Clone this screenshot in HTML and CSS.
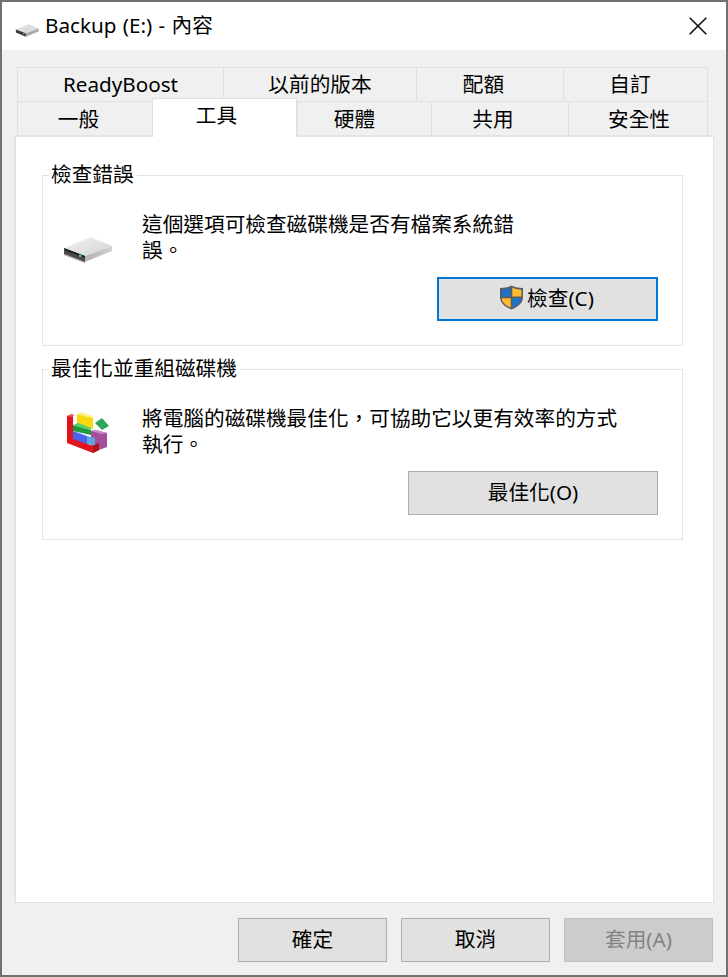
FILE: index.html
```html
<!DOCTYPE html>
<html lang="zh-Hant">
<head>
  <meta charset="UTF-8" />
  <title>Backup (E:) - 內容</title>
  <link rel="stylesheet" href="styles.css">
</head>
<body>
  <div class="window">
    <div class="titlebar">
      <svg class="title-icon" width="26" height="15" viewBox="10 10 55 30">
        <polygon points="14,23 41,12 62,21 35,31" fill="#dedede"/>
        <polygon points="35,31 62,21 62,27 35,38" fill="#a9a9a9"/>
        <polygon points="14,23 35,31 35,38 14,29" fill="#3b3b3b"/>
        <rect x="29" y="30" width="3" height="3" fill="#3fd04a"/>
      </svg>
      <span class="title-text">Backup (E:) - 內容</span>
      <svg class="close-icon" width="18" height="18" viewBox="0 0 18 18">
        <path d="M0.7 0.7 L17.3 17.3 M17.3 0.7 L0.7 17.3" stroke="#111" stroke-width="1.6" fill="none"/>
      </svg>
    </div>

    <div class="content">
      <div class="tabs">
        <div class="tab-row row-top">
          <div class="tab">ReadyBoost</div>
          <div class="tab">以前的版本</div>
          <div class="tab">配額</div>
          <div class="tab">自訂</div>
        </div>
        <div class="tab-row row-bottom">
          <div class="tab">一般</div>
          <div class="tab active">工具</div>
          <div class="tab">硬體</div>
          <div class="tab">共用</div>
          <div class="tab">安全性</div>
        </div>
      </div>

      <div class="panel">
        <fieldset class="group">
          <legend>檢查錯誤</legend>
          <div class="group-body">
            <div class="group-icon">
              <svg class="icon-drive" width="55" height="30" viewBox="10 10 55 30">
                <defs>
                  <linearGradient id="driveTop" x1="0" y1="0" x2="1" y2="1">
                    <stop offset="0" stop-color="#f4f4f4"/>
                    <stop offset="1" stop-color="#d2d2d2"/>
                  </linearGradient>
                  <linearGradient id="driveSide" x1="0" y1="0" x2="1" y2="0">
                    <stop offset="0" stop-color="#b4b4b4"/>
                    <stop offset="1" stop-color="#d0d0d0"/>
                  </linearGradient>
                </defs>
                <polygon points="14,23 41,12 62,21 35,31" fill="url(#driveTop)"/>
                <polygon points="35,31 62,21 62,26 35,37" fill="url(#driveSide)"/>
                <polygon points="14,23 35,31 35,37 14,29" fill="#4a4a4a"/>
                <polygon points="14,23 35,31 35,33 16,26" fill="#222"/>
                <polygon points="14,29 35,37 35,38 14,30" fill="#999"/>
                <rect x="29" y="29.5" width="2.5" height="2.5" fill="#35d64a"/>
              </svg>
            </div>
            <div class="group-main">
              <p class="desc">這個選項可檢查磁碟機是否有檔案系統錯<br>誤。</p>
              <div class="action">
                <button class="btn btn-check focused">
                  <svg class="shield" width="25" height="25" viewBox="0 0 25 25">
                    <path d="M12.5 0.5 C10 2 6 3 1 3 L1 12 C1 18 6 22 12.5 24.5 C19 22 24 18 24 12 L24 3 C19 3 15 2 12.5 0.5 Z" fill="#5c5c5c"/>
                    <path d="M11.7 2.6 C9 4 6 4.6 2.6 4.7 L2.6 11.6 L11.7 11.6 Z" fill="#1d73cc"/>
                    <path d="M13.3 2.6 C16 4 19 4.6 22.4 4.7 L22.4 11.6 L13.3 11.6 Z" fill="#fdbb30"/>
                    <path d="M2.6 13.2 L11.7 13.2 L11.7 22.6 C7 20.6 3.2 17.6 2.6 13.2 Z" fill="#fdbb30"/>
                    <path d="M22.4 13.2 L13.3 13.2 L13.3 22.6 C18 20.6 21.8 17.6 22.4 13.2 Z" fill="#1d73cc"/>
                  </svg>
                  <span>檢查(C)</span>
                </button>
              </div>
            </div>
          </div>
        </fieldset>

        <fieldset class="group">
          <legend>最佳化並重組磁碟機</legend>
          <div class="group-body">
            <div class="group-icon">
              <svg class="icon-defrag" width="47" height="44" viewBox="10 12 47 44">
                <polygon points="36,31 41,30 52,33 52,47 44,50 36,47" fill="#a24f9c"/>
                <polygon points="36,31 41,30 52,33 47,34" fill="#c98ac4"/>
                <polygon points="22,14 38,18 38,29 22,26" fill="#f6d90f"/>
                <polygon points="22,14 26,12 38,16 38,18" fill="#fdf08a"/>
                <polygon points="12,16 17,14 18,16 18,38 38,46 44,43 44,50 38,53 12,43" fill="#e0141f"/>
                <polygon points="38,46 44,43 44,50 38,53" fill="#b01018"/>
                <polygon points="12,16 17,14 19,15 18,17" fill="#f0606a"/>
                <polygon points="18,25 36,30 36,35 18,31" fill="#1f9a3d"/>
                <polygon points="18,25 23,23 36,28 36,30" fill="#52d06a"/>
                <polygon points="18,31 32,36 32,44 18,39" fill="#4a63ea"/>
                <polygon points="32,36 40,38 40,45 32,44" fill="#5aa6de"/>
                <polygon points="40,23 47,18 54,26 47,30" fill="#2fa75a"/>
              </svg>
            </div>
            <div class="group-main">
              <p class="desc">將電腦的磁碟機最佳化，可協助它以更有效率的方式<br>執行。</p>
              <div class="action">
                <button class="btn btn-optimize">最佳化(O)</button>
              </div>
            </div>
          </div>
        </fieldset>
      </div>

      <div class="footer">
        <button class="btn btn-footer">確定</button>
        <button class="btn btn-footer">取消</button>
        <button class="btn btn-footer disabled">套用(A)</button>
      </div>
    </div>
  </div>
</body>
</html>
```

FILE: styles.css
```css
* {
  box-sizing: border-box;
}

body {
  margin: 0;
  background: #fff;
  color: #000;
  font-family: "Noto Sans", "Noto Sans CJK TC", sans-serif;
  font-size: 20.67px;
}

.window {
  display: flex;
  flex-direction: column;
  width: 728px;
  height: 977px;
  border: 2px solid #707070;
  background: #f0f0f0;
}

.titlebar {
  display: flex;
  align-items: center;
  height: 48px;
  padding: 0 19px 0 12px;
  background: #fff;
}

.title-icon {
  margin-top: 8px;
}

.title-text {
  margin-left: 5px;
  flex: 1;
  line-height: 46px;
  height: 48px;
  word-spacing: 1px;
}

.content {
  display: flex;
  flex-direction: column;
  flex: 1;
  padding: 17px 13px 0 12px;
}

.tabs {
  margin-left: 3px;
  width: 691px;
}

.tab-row {
  display: grid;
}

.row-top {
  grid-template-columns: 206px 193px 147px 145px;
  height: 34px;
}

.row-bottom {
  grid-template-columns: 135px 145px 134px 137px 140px;
  height: 35px;
}

.tab {
  border: 1px solid #e0e0e0;
  border-right: none;
  border-bottom: none;
  text-align: center;
  line-height: 33px;
  white-space: nowrap;
}

.tab:last-child {
  border-right: 1px solid #e0e0e0;
}

/* labels sit off centre in the original tabs */
.row-top .tab:nth-child(3) {
  padding-right: 13px;
}

.row-top .tab:nth-child(4) {
  padding-right: 11px;
}

.row-bottom .tab {
  line-height: 34px;
}

.row-bottom .tab:nth-child(1) {
  padding-right: 13px;
}

.row-bottom .tab:nth-child(2) {
  padding-right: 16px;
}

.row-bottom .tab:nth-child(3) {
  padding-right: 20px;
}

.row-bottom .tab:nth-child(4) {
  padding-right: 14px;
}

.row-bottom .tab:nth-child(5) {
  padding-left: 2px;
}

.row-bottom .tab.active {
  margin-top: -3px;
  height: 39px;
  border-right: 1px solid #e0e0e0;
  background: #fff;
  position: relative;
  z-index: 1;
  line-height: 32px;
}

.panel {
  flex: 1;
  padding: 25px 30px 0 26px;
  background: #fff;
  border: 2px solid #e3e3e3;
  border-right-width: 1px;
  border-bottom-width: 1px;
  margin-top: -1px;
  margin-right: -1px;
}

.group {
  margin: 0 0 10px;
  padding: 23px 0 0;
  min-width: 0;
  height: 184px;
  border: 1.5px solid #e3e3e3;
}

.group legend {
  margin-left: 6px;
  padding: 0 3px 0 2px;
  line-height: 24px;
  height: 26px;
}

.group-body {
  display: flex;
}

.group-icon {
  flex: none;
  width: 99px;
}

.icon-drive {
  display: block;
  margin: 24px 0 0 17px;
}

.icon-defrag {
  display: block;
  margin: 7px 0 0 22px;
}

.group-main {
  flex: 1;
}

.desc {
  margin: 0;
  line-height: 26px;
}

.action {
  display: flex;
  justify-content: flex-end;
  margin-top: 14px;
  padding-right: 24px;
}

.btn {
  display: flex;
  align-items: center;
  justify-content: center;
  height: 44px;
  padding: 0 0 4px;
  border: 1px solid #adadad;
  background: #e1e1e1;
  color: #000;
  font-family: inherit;
  font-size: inherit;
}

.btn.focused {
  border: 2px solid #0078d7;
}

.btn-check {
  width: 221px;
  padding-right: 2px;
}

.shield {
  margin-right: 3px;
}

.btn-optimize {
  width: 250px;
}

.footer {
  display: flex;
  justify-content: flex-end;
  gap: 14px;
  padding-top: 15px;
  height: 72px;
}

.btn-footer {
  width: 149px;
}

.btn-footer.disabled {
  background: #ccc;
  border-color: #bfbfbf;
  color: #838383;
}
```
